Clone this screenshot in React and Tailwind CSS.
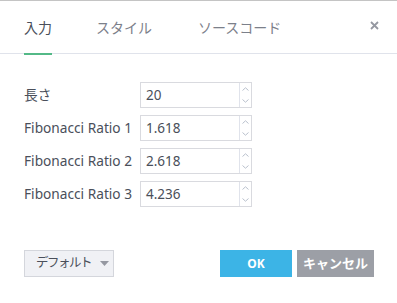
import { useState } from 'react'

const fields = [
  { label: '長さ', value: '20' },
  { label: 'Fibonacci Ratio 1', value: '1.618' },
  { label: 'Fibonacci Ratio 2', value: '2.618' },
  { label: 'Fibonacci Ratio 3', value: '4.236' },
]

const tabs = ['入力', 'スタイル', 'ソースコード']

function Chevron({ up }) {
  return (
    <svg width="7" height="4" viewBox="0 0 7 4" className="block">
      <path
        d={up ? 'M0.5 3.5 L3.5 0.8 L6.5 3.5' : 'M0.5 0.5 L3.5 3.2 L6.5 0.5'}
        fill="none"
        stroke="#b9c0cc"
        strokeWidth="1"
      />
    </svg>
  )
}

function NumberField({ value }) {
  return (
    <div className="flex h-[26px] w-[112px] border border-[#d9dadf] bg-white">
      <div className="flex flex-1 items-center pl-[5px] text-[13.5px] text-[#4a4f5a]">{value}</div>
      <div className="flex w-[12px] flex-col border-l border-[#e0e3eb]">
        <div className="flex flex-1 items-center justify-center">
          <Chevron up />
        </div>
        <div className="flex flex-1 items-center justify-center">
          <Chevron />
        </div>
      </div>
    </div>
  )
}

export default function App() {
  const [active, setActive] = useState(0)

  return (
    <div
      className="flex h-[303px] w-[397px] flex-col border-t border-[#c4c4c4] bg-white"
      style={{ fontFamily: '"Noto Sans", "Noto Sans CJK JP", sans-serif' }}
    >
      {/* header */}
      <div className="flex h-[53px] items-center border-b border-[#e0e3eb] pl-[24px] pr-[18px]">
        <div className="flex h-full flex-1 items-stretch">
          {tabs.map((tab, i) => (
            <button
              key={tab}
              onClick={() => setActive(i)}
              className={`relative flex items-center text-[14px] ${i === 0 ? 'mr-[44px]' : 'mr-[46px]'} ${
                active === i ? 'text-[#4a4f5a]' : 'text-[#7c808a]'
              }`}
            >
              {tab}
              {active === i && (
                <span className="absolute bottom-[-2px] left-0 right-0 h-[2px] bg-[#53b987]" />
              )}
            </button>
          ))}
        </div>
        <svg width="9" height="9" viewBox="0 0 9 9" className="mb-[3px]">
          <path d="M1 1 L8 8 M8 1 L1 8" stroke="#9598a1" strokeWidth="1.8" />
        </svg>
      </div>

      {/* body */}
      <div className="flex flex-col gap-[7px] pl-[24px] pt-[28px]">
        {fields.map((f) => (
          <div key={f.label} className="flex items-center">
            <div className="w-[116px] text-[13.7px] text-[#4a4f5a]">{f.label}</div>
            <NumberField value={f.value} />
          </div>
        ))}
      </div>

      {/* footer */}
      <div className="mt-[43px] flex items-center pl-[24px] pr-[23px]">
        <button className="flex h-[27px] w-[90px] items-center gap-[9px] whitespace-nowrap border border-[#d4d6dc] bg-[#f0f1f5] pl-[11px] text-[12.5px] tracking-[-1.5px] text-[#4a4f5a]">
          <span>デフォルト</span>
          <svg width="9" height="5" viewBox="0 0 9 5" className="shrink-0">
            <path d="M0 0 L9 0 L4.5 5 Z" fill="#9598a1" />
          </svg>
        </button>
        <div className="flex-1" />
        <button className="h-[27px] w-[72px] bg-[#3cb4e6] text-[12px] font-bold text-white">OK</button>
        <button className="ml-[5px] h-[27px] w-[77px] bg-[#9c9fa6] text-[13px] font-bold text-white">
          キャンセル
        </button>
      </div>
    </div>
  )
}
